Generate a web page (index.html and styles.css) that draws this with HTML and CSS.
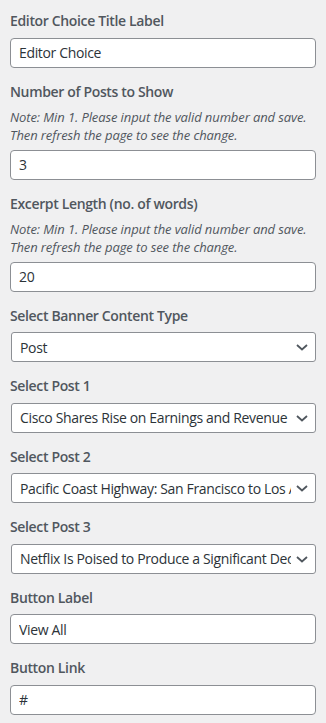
FILE: index.html
```html
<!DOCTYPE html>
<html lang="en">

<head>
  <meta charset="UTF-8" />
  <meta name="viewport" content="width=device-width, initial-scale=1.0" />
  <title>Editor Choice</title>
  <link rel="stylesheet" href="styles.css">
</head>

<body>
  <ul class="controls">
    <li class="control">
      <label class="control-title" for="titleLabel">Editor Choice Title Label</label>
      <input type="text" id="titleLabel" value="Editor Choice">
    </li>
    <li class="control">
      <label class="control-title" for="postCount">Number of Posts to Show</label>
      <span class="control-description">Note: Min 1. Please input the valid number and save. Then refresh the page to see the change.</span>
      <input type="text" id="postCount" value="3">
    </li>
    <li class="control">
      <label class="control-title" for="excerptLength">Excerpt Length (no. of words)</label>
      <span class="control-description">Note: Min 1. Please input the valid number and save. Then refresh the page to see the change.</span>
      <input type="text" id="excerptLength" value="20">
    </li>
    <li class="control">
      <label class="control-title" for="contentType">Select Banner Content Type</label>
      <div class="select-wrap">
        <select id="contentType">
          <option>Post</option>
          <option>Category</option>
        </select>
        <svg class="chevron" viewBox="0 0 12 7"><path d="M1 1l5 4.5L11 1" /></svg>
      </div>
    </li>
    <li class="control">
      <label class="control-title" for="post1">Select Post 1</label>
      <div class="select-wrap">
        <select id="post1">
          <option>Cisco Shares Rise on Earnings and Revenue Beat</option>
        </select>
        <svg class="chevron" viewBox="0 0 12 7"><path d="M1 1l5 4.5L11 1" /></svg>
      </div>
    </li>
    <li class="control">
      <label class="control-title" for="post2">Select Post 2</label>
      <div class="select-wrap">
        <select id="post2">
          <option>Pacific Coast Highway: San Francisco to Los Angeles</option>
        </select>
        <svg class="chevron" viewBox="0 0 12 7"><path d="M1 1l5 4.5L11 1" /></svg>
      </div>
    </li>
    <li class="control">
      <label class="control-title" for="post3">Select Post 3</label>
      <div class="select-wrap">
        <select id="post3">
          <option>Netflix Is Poised to Produce a Significant Decline</option>
        </select>
        <svg class="chevron" viewBox="0 0 12 7"><path d="M1 1l5 4.5L11 1" /></svg>
      </div>
    </li>
    <li class="control">
      <label class="control-title" for="buttonLabel">Button Label</label>
      <input type="text" id="buttonLabel" value="View All">
    </li>
    <li class="control">
      <label class="control-title" for="buttonLink">Button Link</label>
      <input type="text" id="buttonLink" value="#">
    </li>
  </ul>
</body>

</html>
```

FILE: styles.css
```css
* {
  margin: 0;
  padding: 0;
  box-sizing: border-box;
}

body {
  font-family: "Open Sans", "Noto Sans", sans-serif;
  font-size: 13px;
  background-color: #f0f0f1;
  color: #3c434a;
}

.controls {
  list-style: none;
  padding: 9px 10px 0 10px;
}

.control {
  margin-bottom: 12px;
}

.control-title {
  display: block;
  font-size: 14px;
  line-height: 24.5px;
  font-weight: 600;
  letter-spacing: -0.35px;
  margin-bottom: 4px;
  color: #50575e;
}

.control-description {
  display: block;
  font-style: italic;
  line-height: 18px;
  letter-spacing: -0.1px;
  margin-bottom: 5.5px;
  color: #50575e;
}

input,
select {
  display: block;
  width: 100%;
  height: 30px;
  font-family: inherit;
  font-size: 14px;
  letter-spacing: -0.35px;
  color: #2c3338;
  background-color: #fff;
  border: 1px solid #8c8f94;
  outline: none;
}

input {
  padding: 0 8px;
  border-radius: 4px;
}

.select-wrap {
  position: relative;
  margin-left: 1px;
}

select {
  appearance: none;
  -webkit-appearance: none;
  padding: 0 24px 0 8px;
  border-radius: 3px;
}

.chevron {
  position: absolute;
  right: 8px;
  top: 12px;
  width: 12px;
  height: 7px;
  fill: none;
  stroke: #50575e;
  stroke-width: 1.8;
  pointer-events: none;
}
```
